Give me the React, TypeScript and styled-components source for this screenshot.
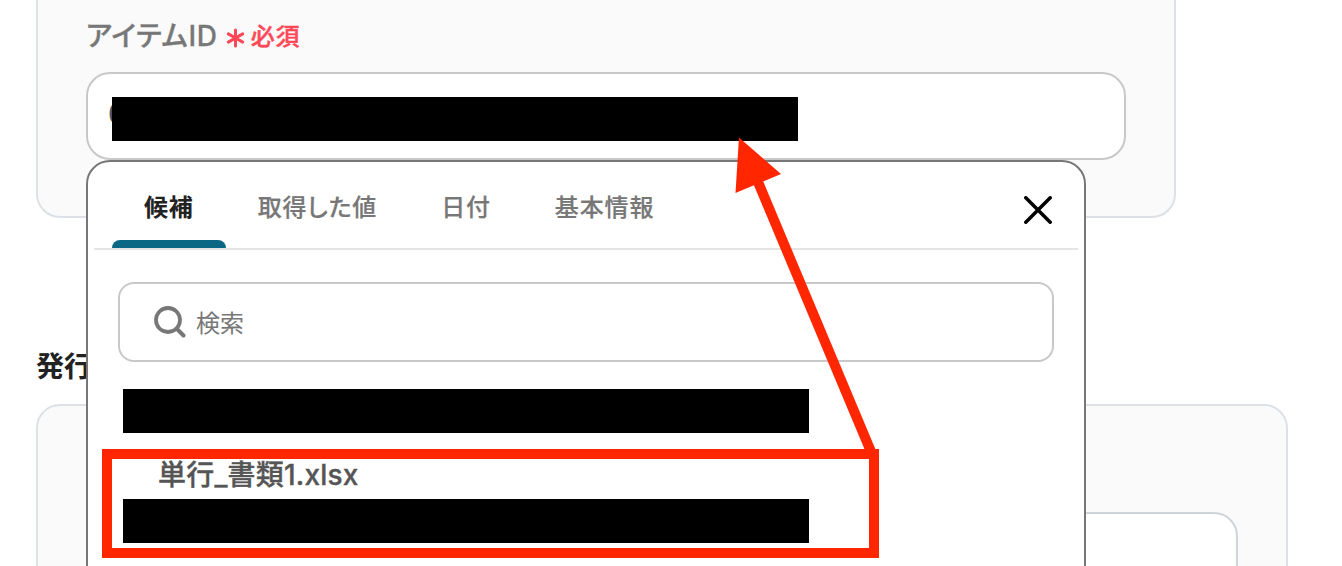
import React from 'react';
import styled, { createGlobalStyle } from 'styled-components';

const GlobalStyle = createGlobalStyle`
  * {
    box-sizing: border-box;
  }

  body {
    margin: 0;
    background: #fff;
    font-family: Inter, 'Noto Sans CJK JP', sans-serif;
    -webkit-text-stroke: 0.05px currentColor;
  }
`;

const Page = styled.main`
  position: relative;
  width: 1342px;
  height: 566px;
  padding: 0 36px;
  overflow: hidden;
`;

const Panel = styled.section<{ $width: number }>`
  width: ${({ $width }) => $width}px;
  padding: 0 48px;
  background: #fafafa;
  border: 2px solid #dde1e5;
`;

const ItemPanel = styled(Panel)`
  height: 218px;
  border-top: none;
  border-radius: 0 0 24px 24px;
`;

const IssuePanel = styled(Panel)`
  height: 240px;
  padding-top: 106px;
  border-radius: 24px;
`;

const FieldLabel = styled.div`
  display: flex;
  align-items: center;
  height: 72px;
  color: #777;
  font-size: 28px;
  font-weight: 500;
  line-height: 40px;
  -webkit-text-stroke: 0.3px currentColor;
`;

const LabelText = styled.span`
  padding-bottom: 1px;
  font-feature-settings: 'palt';
  letter-spacing: 0.7px;
`;

const Required = styled.span`
  display: flex;
  align-items: center;
  gap: 6px;
  margin-left: 8px;
  color: #ff4757;
  font-size: 24px;
  letter-spacing: 0.8px;
  -webkit-text-stroke: 0.4px currentColor;

  svg {
    margin-top: 4px;
  }
`;

const RequiredText = styled.span`
  padding-top: 1px;
`;

const TextField = styled.div`
  display: flex;
  align-items: center;
  width: 1040px;
  height: 88px;
  padding: 0 20px 4px;
  background: #fff;
  border: 2px solid #c8c8c8;
  border-radius: 24px;
  color: #4a5260;
  font-size: 28px;
`;

const IssueField = styled(TextField)`
  width: 1152px;
  border-color: #ced4da;
`;

const SectionTitle = styled.h2`
  height: 186px;
  margin: 0;
  padding-top: 129px;
  color: #222;
  font-size: 28px;
  font-weight: 700;
  line-height: 40px;
`;

const Dropdown = styled.div`
  position: absolute;
  top: 160px;
  left: 86px;
  width: 1000px;
  height: 440px;
  padding: 0 6px;
  background: #fff;
  border: 2px solid #777;
  border-radius: 24px;
`;

const DropdownHeader = styled.div`
  display: flex;
  justify-content: space-between;
  height: 88px;
  padding: 0 26px 0 18px;
  border-bottom: 2px solid #e4e4e4;
`;

const TabList = styled.div`
  display: flex;
`;

const Tab = styled.button<{ $active?: boolean }>`
  position: relative;
  height: 86px;
  padding: 6px 32px 0;
  background: none;
  border: none;
  color: ${({ $active }) => ($active ? '#222' : '#777')};
  font-family: inherit;
  font-size: 24px;
  font-weight: ${({ $active }) => ($active ? 700 : 500)};
  font-feature-settings: 'palt';
  letter-spacing: 0.85px;
  line-height: 36px;
  -webkit-text-stroke: ${({ $active }) => ($active ? 0.05 : 0.2)}px currentColor;

  &::after {
    content: '';
    position: absolute;
    right: 0;
    bottom: 0;
    left: 0;
    height: 8px;
    background: ${({ $active }) => ($active ? '#0b6884' : 'transparent')};
    border-radius: 8px 8px 0 0;
  }
`;

const CloseButton = styled.button`
  display: flex;
  align-items: center;
  height: 96px;
  padding: 0;
  background: none;
  border: none;
`;

const SearchBox = styled.div`
  display: flex;
  align-items: center;
  gap: 10px;
  height: 80px;
  margin: 32px 24px 0;
  padding: 0 32px;
  border: 2px solid #c8c8c8;
  border-radius: 16px;
  color: #777;
  font-size: 24px;
  line-height: 36px;
`;

const Placeholder = styled.span`
  padding-top: 3px;
`;

const Candidates = styled.ul`
  display: flex;
  flex-direction: column;
  margin: 0;
  padding: 27px 29px;
  list-style: none;
`;

const Candidate = styled.li`
  display: flex;
  flex-direction: column;
  color: #555;
  font-size: 28px;
  font-weight: 500;
  line-height: 40px;
`;

const CandidateName = styled.span`
  height: 66px;
  padding: 22px 0 0 35px;
  letter-spacing: 0.2px;
  -webkit-text-stroke: 0.35px currentColor;
`;

const Redaction = styled.span`
  display: block;
  width: 686px;
  height: 44px;
  background: #000;
`;

const FieldRedaction = styled(Redaction)`
  position: absolute;
  top: 97px;
  left: 112px;
`;

const Highlight = styled.div`
  position: absolute;
  top: 449px;
  left: 102px;
  width: 777px;
  height: 109px;
  border: 10px solid #ff2600;
`;

const Arrow = styled.svg`
  position: absolute;
  top: 130px;
  left: 720px;
`;

const tabs = ['候補', '取得した値', '日付', '基本情報'];

const AsteriskIcon = () => (
  <svg width="19" height="20" viewBox="0 0 19 20" fill="none">
    <path
      d="M9.5 2v16M2.3 5.9l14.4 8.2M16.7 5.9L2.3 14.1"
      stroke="currentColor"
      strokeWidth="3"
      strokeLinecap="round"
    />
  </svg>
);

const SearchIcon = () => (
  <svg width="34" height="34" viewBox="0 0 34 34" fill="none">
    <circle cx="16" cy="15" r="12" stroke="currentColor" strokeWidth="3.8" />
    <path
      d="M24.5 23.5L31.5 30.5"
      stroke="currentColor"
      strokeWidth="4"
      strokeLinecap="round"
    />
  </svg>
);

const CloseIcon = () => (
  <svg width="28" height="28" viewBox="0 0 28 28" fill="none">
    <path
      d="M1.8 1.8l24.4 24.4M26.2 1.8L1.8 26.2"
      stroke="#000"
      strokeWidth="3.5"
      strokeLinecap="round"
    />
  </svg>
);

export default function App() {
  return (
    <>
      <GlobalStyle />
      <Page>
        <ItemPanel $width={1140}>
          <FieldLabel>
            <LabelText>アイテムID</LabelText>
            <Required>
              <AsteriskIcon />
              <RequiredText>必須</RequiredText>
            </Required>
          </FieldLabel>
          <TextField>0</TextField>
          <FieldRedaction />
        </ItemPanel>

        <SectionTitle>発行</SectionTitle>
        <IssuePanel $width={1252}>
          <IssueField />
        </IssuePanel>

        <Dropdown>
          <DropdownHeader>
            <TabList>
              {tabs.map((tab, index) => (
                <Tab key={tab} $active={index === 0}>
                  {tab}
                </Tab>
              ))}
            </TabList>
            <CloseButton aria-label="閉じる">
              <CloseIcon />
            </CloseButton>
          </DropdownHeader>

          <SearchBox>
            <SearchIcon />
            <Placeholder>検索</Placeholder>
          </SearchBox>

          <Candidates>
            <Candidate>
              <Redaction />
            </Candidate>
            <Candidate>
              <CandidateName>単行_書類1.xlsx</CandidateName>
              <Redaction />
            </Candidate>
          </Candidates>
        </Dropdown>

        <Highlight />
        <Arrow width="170" height="340" viewBox="720 130 170 340">
          <path d="M758 182L872 454" stroke="#ff2600" strokeWidth="10" />
          <path d="M739 137.500L781 174L735.500 193Z" fill="#ff2600" />
        </Arrow>
      </Page>
    </>
  );
}
